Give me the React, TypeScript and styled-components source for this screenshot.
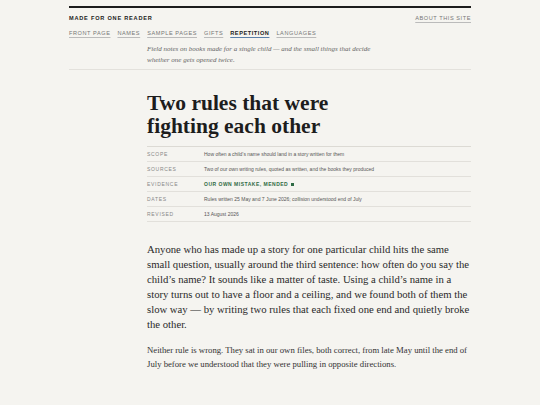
import styled, { createGlobalStyle } from 'styled-components'

const GlobalStyle = createGlobalStyle`
  html, body { margin: 0; padding: 0; background: #f5f4f0; }
  body { font-family: "Liberation Serif", Georgia, serif; color: #222; }
`

const Page = styled.div`
  width: 402px;
  margin: 0 auto;
  padding-top: 6px;
`

const Masthead = styled.header`
  border-top: 2px solid #1c1c1c;
  padding-top: 7px;
`

const TopRow = styled.div`
  display: flex;
  justify-content: space-between;
  align-items: baseline;
`

const SiteName = styled.div`
  font-family: "Liberation Sans", Arial, sans-serif;
  font-weight: 700;
  font-size: 5.6px;
  letter-spacing: 0.14em;
  color: #1c1c1c;
`

const SmallLink = styled.a<{ $active?: boolean }>`
  font-family: "Liberation Sans", Arial, sans-serif;
  font-size: 5.6px;
  letter-spacing: 0.1em;
  color: ${p => (p.$active ? '#1c1c1c' : '#777')};
  font-weight: ${p => (p.$active ? 700 : 400)};
  text-decoration: underline;
  text-decoration-color: ${p => (p.$active ? '#5a7fa8' : '#bbb')};
  text-decoration-thickness: ${p => (p.$active ? '1px' : '0.5px')};
  text-underline-offset: 1.5px;
`

const Nav = styled.nav`
  display: flex;
  gap: 7px;
  margin-top: 9px;
`

const Tagline = styled.p`
  margin: 8px 0 0 78px;
  width: 236px;
  font-style: italic;
  font-size: 7px;
  line-height: 10.5px;
  color: #666;
  padding-bottom: 4px;
`

const Divider = styled.div`
  border-top: 1px solid #e3e1dc;
`

const Article = styled.article`
  margin-left: 78px;
  padding-top: 22px;
`

const Title = styled.h1`
  margin: 0;
  font-size: 21.5px;
  line-height: 23px;
  font-weight: 700;
  color: #1d1d1d;
`

const Meta = styled.dl`
  margin: 8px 0 0;
  border-top: 1px solid #dcdad4;
`

const MetaRow = styled.div`
  display: grid;
  grid-template-columns: 57px 1fr;
  align-items: center;
  height: 14px;
  border-bottom: 1px solid #e2e0db;
`

const MetaLabel = styled.dt`
  font-family: "Liberation Sans", Arial, sans-serif;
  font-size: 5px;
  letter-spacing: 0.14em;
  color: #888;
`

const MetaValue = styled.dd<{ $accent?: boolean }>`
  margin: 0;
  font-family: "Liberation Sans", Arial, sans-serif;
  font-size: 5px;
  letter-spacing: ${p => (p.$accent ? '0.1em' : '0')};
  font-weight: ${p => (p.$accent ? 700 : 400)};
  color: ${p => (p.$accent ? '#2f6b45' : '#555')};
  display: flex;
  align-items: center;
  gap: 3px;
`

const Square = styled.span`
  display: inline-block;
  width: 3px;
  height: 3px;
  background: #2f6b45;
`

const Lead = styled.p`
  margin: 20px 0 0;
  width: 324px;
  font-size: 10.7px;
  line-height: 15px;
  color: #2a2a2a;
`

const Body = styled.p`
  margin: 11px 0 0;
  width: 326px;
  font-size: 8.7px;
  line-height: 14px;
  color: #333;
`

const navItems = ['FRONT PAGE', 'NAMES', 'SAMPLE PAGES', 'GIFTS', 'REPETITION', 'LANGUAGES']

const meta: { label: string, value: string, accent?: boolean }[] = [
  { label: 'SCOPE', value: 'How often a child\u2019s name should land in a story written for them' },
  { label: 'SOURCES', value: 'Two of our own writing rules, quoted as written, and the books they produced' },
  { label: 'EVIDENCE', value: 'OUR OWN MISTAKE, MENDED', accent: true },
  { label: 'DATES', value: 'Rules written 25 May and 7 June 2026; collision understood end of July' },
  { label: 'REVISED', value: '13 August 2026' }
]

export default function App () {
  return (
    <>
      <GlobalStyle />
      <Page>
        <Masthead>
          <TopRow>
            <SiteName>MADE FOR ONE READER</SiteName>
            <SmallLink>ABOUT THIS SITE</SmallLink>
          </TopRow>
          <Nav>
            {navItems.map(item => (
              <SmallLink key={item} $active={item === 'REPETITION'}>{item}</SmallLink>
            ))}
          </Nav>
          <Tagline>
            Field notes on books made for a single child — and the small things that decide whether one gets opened twice.
          </Tagline>
        </Masthead>
        <Divider />
        <Article>
          <Title>Two rules that were<br />fighting each other</Title>
          <Meta>
            {meta.map(row => (
              <MetaRow key={row.label}>
                <MetaLabel>{row.label}</MetaLabel>
                <MetaValue $accent={row.accent}>
                  {row.value}
                  {row.accent && <Square />}
                </MetaValue>
              </MetaRow>
            ))}
          </Meta>
          <Lead>
            Anyone who has made up a story for one particular child hits the same small question, usually around the third sentence: how often do you say the child’s name? It sounds like a matter of taste. Using a child’s name in a story turns out to have a floor and a ceiling, and we found both of them the slow way — by writing two rules that each fixed one end and quietly broke the other.
          </Lead>
          <Body>
            Neither rule is wrong. They sat in our own files, both correct, from late May until the end of July before we understood that they were pulling in opposite directions.
          </Body>
        </Article>
      </Page>
    </>
  )
}
